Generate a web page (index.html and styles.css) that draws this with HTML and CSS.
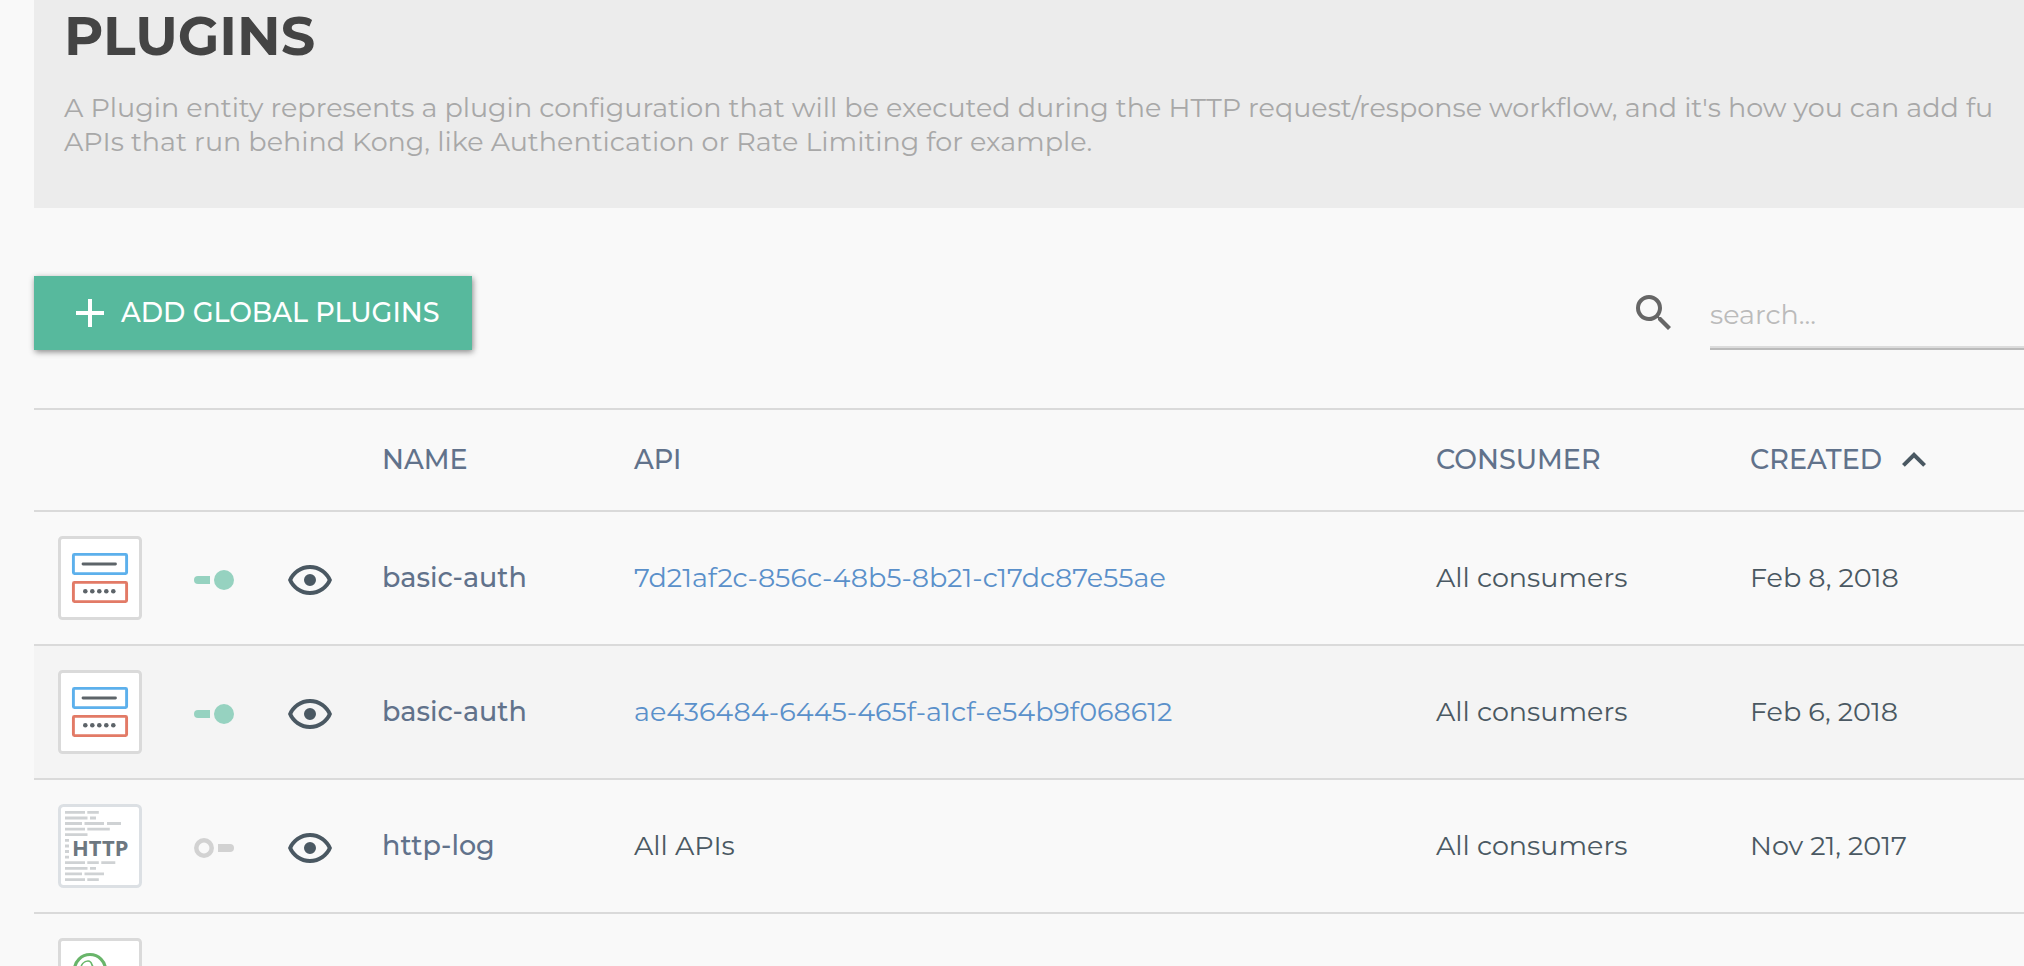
FILE: index.html
```html
<!DOCTYPE html>
<html lang="en">
<head>
<meta charset="utf-8">
<title>Plugins</title>
<link rel="stylesheet" href="styles.css">
</head>
<body>
<svg class="sprite" aria-hidden="true">
  <symbol id="eye" viewBox="1 4 22 16"><path d="M12,9A3,3 0 0,1 15,12A3,3 0 0,1 12,15A3,3 0 0,1 9,12A3,3 0 0,1 12,9M12,4.5C17,4.5 21.27,7.61 23,12C21.27,16.39 17,19.5 12,19.5C7,19.5 2.73,16.39 1,12C2.73,7.61 7,4.5 12,4.5M3.18,12C4.83,15.36 8.24,17.5 12,17.5C15.76,17.5 19.17,15.36 20.82,12C19.17,8.64 15.76,6.5 12,6.5C8.24,6.5 4.83,8.64 3.18,12Z"/></symbol>
  <symbol id="toggle-on" viewBox="0 0 40 20"><path d="M4 6H16V14H4A4 4 0 0 1 4 6Z"/><circle cx="30" cy="10" r="10"/></symbol>
  <symbol id="toggle-off" viewBox="0 0 40 20"><path d="M24 6H36A4 4 0 0 1 36 14H24Z"/><circle cx="10" cy="10" r="7.700" fill="none" stroke="currentColor" stroke-width="4.500"/></symbol>
  <symbol id="basic-auth" viewBox="0 0 84 84">
    <rect x="1.500" y="1.500" width="81" height="81" rx="3" fill="#fff" stroke="#dadada" stroke-width="3"/>
    <rect x="15.400" y="18.400" width="53.200" height="19.200" rx="1" fill="#fff" stroke="#5cb0ec" stroke-width="2.900"/>
    <path d="M25 28H57.500" stroke="#5d6469" stroke-width="2.800" stroke-linecap="round"/>
    <rect x="15.400" y="46.400" width="53.200" height="19.200" rx="1" fill="#fff" stroke="#e27a66" stroke-width="2.900"/>
    <g fill="#5d6469"><circle cx="27.300" cy="55.300" r="2.300"/><circle cx="34.300" cy="55.300" r="2.300"/><circle cx="41.300" cy="55.300" r="2.300"/><circle cx="48.300" cy="55.300" r="2.300"/><circle cx="55.300" cy="55.300" r="2.300"/></g>
  </symbol>
</svg>
<main class="page">
  <header class="intro">
    <h1 class="intro-title">PLUGINS</h1>
    <p class="intro-text">A Plugin entity represents a plugin configuration that will be executed during the HTTP request/response workflow, and it's how you can add fu<br>APIs that run behind Kong, like Authentication or Rate Limiting for example.</p>
  </header>

  <div class="toolbar">
    <button class="add" type="button">
      <svg class="add-icon" viewBox="0 0 28 28" aria-hidden="true"><path d="M14 0V28M0 14H28" stroke="currentColor" stroke-width="4"/></svg>
      <span>ADD GLOBAL PLUGINS</span>
    </button>
    <div class="search">
      <label for="q"><svg class="search-icon" viewBox="3 3 18 18" role="img" aria-label="Search"><path d="M9.500,3A6.500,6.500 0 0,1 16,9.500C16,11.110 15.410,12.590 14.440,13.730L14.710,14H15.500L20.500,19L19,20.500L14,15.500V14.710L13.730,14.440C12.590,15.410 11.110,16 9.500,16A6.500,6.500 0 0,1 3,9.500A6.500,6.500 0 0,1 9.500,3M9.500,5C7,5 5,7 5,9.500C5,12 7,14 9.500,14C12,14 14,12 14,9.500C14,7 12,5 9.500,5Z"/></svg></label>
      <input class="search-input" id="q" type="text" placeholder="search...">
    </div>
  </div>

  <table class="plugins">
    <colgroup><col class="c-icon"><col class="c-action"><col class="c-action"><col class="c-name"><col class="c-api"><col class="c-consumer"><col></colgroup>
    <thead>
      <tr>
        <th></th><th></th><th></th>
        <th scope="col">NAME</th>
        <th scope="col">API</th>
        <th scope="col">CONSUMER</th>
        <th scope="col"><button class="sort" type="button">CREATED<svg class="sort-icon" viewBox="6 8 12 8" aria-hidden="true"><path d="M7.410,15.410L12,10.830L16.590,15.410L18,14L12,8L6,14L7.410,15.410Z"/></svg></button></th>
      </tr>
    </thead>
    <tbody>
      <tr>
        <td><svg class="thumb" aria-hidden="true"><use href="#basic-auth"/></svg></td>
        <td><button class="icon-button on" type="button" aria-label="Disable"><svg class="toggle"><use href="#toggle-on"/></svg></button></td>
        <td><button class="icon-button" type="button" aria-label="View"><svg class="eye"><use href="#eye"/></svg></button></td>
        <td class="name">basic-auth</td>
        <td><a class="api" href="#">7d21af2c-856c-48b5-8b21-c17dc87e55ae</a></td>
        <td>All consumers</td>
        <td>Feb 8, 2018</td>
      </tr>
      <tr>
        <td><svg class="thumb" aria-hidden="true"><use href="#basic-auth"/></svg></td>
        <td><button class="icon-button on" type="button" aria-label="Disable"><svg class="toggle"><use href="#toggle-on"/></svg></button></td>
        <td><button class="icon-button" type="button" aria-label="View"><svg class="eye"><use href="#eye"/></svg></button></td>
        <td class="name">basic-auth</td>
        <td><a class="api" href="#">ae436484-6445-465f-a1cf-e54b9f068612</a></td>
        <td>All consumers</td>
        <td>Feb 6, 2018</td>
      </tr>
      <tr>
        <td><svg class="thumb" viewBox="0 0 84 84" aria-hidden="true">
          <rect x="1.500" y="1.500" width="81" height="81" rx="4" fill="#fff" stroke="#dce0e4" stroke-width="3"/>
          <path d="M7 8.300h20m2.300 0h11.500M7 14h22.500m2.500 0h6M7 19.500h17m2.500 0h19.500m3 0h14M7 25.200h20m2.300 0h22.500M7 30.700h22.500M7 36.400h4M7 42h4M7 47.500h4M7 53.200h4M7 58.700h20m2.300 0h11.500m2.500 0h14M7 64.400h22.500m2.500 0h6M7 69.900h17m2.500 0h19.500M7 75.600h20m2.300 0h11.500" fill="none" stroke="#cfd2d4" stroke-width="2.800"/>
          <text class="thumb-text" x="14" y="52">HTTP</text>
        </svg></td>
        <td><button class="icon-button off" type="button" aria-label="Enable"><svg class="toggle"><use href="#toggle-off"/></svg></button></td>
        <td><button class="icon-button" type="button" aria-label="View"><svg class="eye"><use href="#eye"/></svg></button></td>
        <td class="name">http-log</td>
        <td>All APIs</td>
        <td>All consumers</td>
        <td>Nov 21, 2017</td>
      </tr>
      <tr>
        <td><svg class="thumb" viewBox="0 0 84 84" aria-hidden="true">
          <rect x="1.500" y="1.500" width="81" height="81" rx="3" fill="#fff" stroke="#dadada" stroke-width="3"/>
          <circle cx="32" cy="32" r="15.500" fill="none" stroke="#69b56a" stroke-width="3.200"/>
          <path d="M22 32C23 27 26 23 30 23Q33 23 34 27L37 32" fill="none" stroke="#69b56a" stroke-width="1.600"/>
        </svg></td>
        <td></td><td></td><td></td><td></td><td></td><td></td>
      </tr>
    </tbody>
  </table>
</main>
</body>
</html>
```
FILE: styles.css
```css
* { box-sizing: border-box; }

body {
  margin: 0;
  height: 100vh;
  overflow: hidden;
  background: #f9f9f9;
  color: #4a5862;
  font: 400 27px/34px Montserrat, Inter, sans-serif;
}

button, input {
  font: inherit;
  color: inherit;
  border: 0;
  border-radius: 0;
  background: none;
  padding: 0;
}

svg { display: block; fill: currentColor; }

.sprite { display: none; }

.page {
  height: 100%;
  padding-left: 34px;
  overflow: hidden;
}

.intro {
  padding: 4px 0 49px 30px;
  background: #ececec;
}

.intro-title {
  margin: 0 0 23px;
  color: #444;
  font-size: 54px;
  font-weight: 700;
  line-height: 64px;
}

.intro-text {
  margin: 0;
  color: #a8a8a8;
  white-space: nowrap;
}

.toolbar {
  display: flex;
  justify-content: space-between;
  margin: 68px 0 58px;
}

.add {
  display: flex;
  align-items: center;
  gap: 17px;
  height: 74px;
  padding: 0 32px 0 42px;
  background: #57b99d;
  color: #fff;
  font-weight: 500;
  box-shadow: 1px 2px 6px rgba(0, 0, 0, .45);
}

.add-icon { width: 28px; height: 28px; }

.search {
  display: flex;
  align-items: center;
  gap: 38px;
  color: #666;
}

.search-icon { width: 36px; height: 36px; }

.search-input {
  width: 314px;
  height: 74px;
  padding-top: 4px;
  border-bottom: 2px solid #bbb;
  box-shadow: inset 0 -2px #dcdcdc;
  outline: 0;
}

.search-input::placeholder { color: #bbb; opacity: 1; }

.plugins {
  width: 100%;
  table-layout: fixed;
  border-spacing: 0;
  border-top: 2px solid #dadada;
}

.c-icon { width: 136px; }
.c-action { width: 94px; }
.c-name { width: 252px; }
.c-api { width: 802px; }
.c-consumer { width: 314px; }

th, td {
  padding: 24px 0 24px 24px;
  border-bottom: 2px solid #dadada;
  text-align: left;
  vertical-align: middle;
  white-space: nowrap;
}

th {
  height: 102px;
  color: #61728b;
  font-weight: 500;
}

tbody tr:nth-child(even) { background: #f4f4f4; }
tbody tr:nth-child(4) { background: none; }

.name { color: #61728b; font-weight: 500; }

.api { color: #5a90ca; text-decoration: none; }

.thumb { width: 84px; height: 84px; }

.thumb-text { fill: #6d7780; font: 700 22px "Noto Sans", sans-serif; }

.icon-button { display: block; padding-top: 4px; color: #4a5862; }
.icon-button.on { color: #96d2c0; }
.icon-button.off { color: #d2d2d2; }

.toggle { width: 40px; height: 20px; }
.eye { width: 44px; height: 32px; }

.sort { display: flex; align-items: center; gap: 20px; }
.sort-icon { width: 24px; height: 16px; color: #4a5862; }
```
